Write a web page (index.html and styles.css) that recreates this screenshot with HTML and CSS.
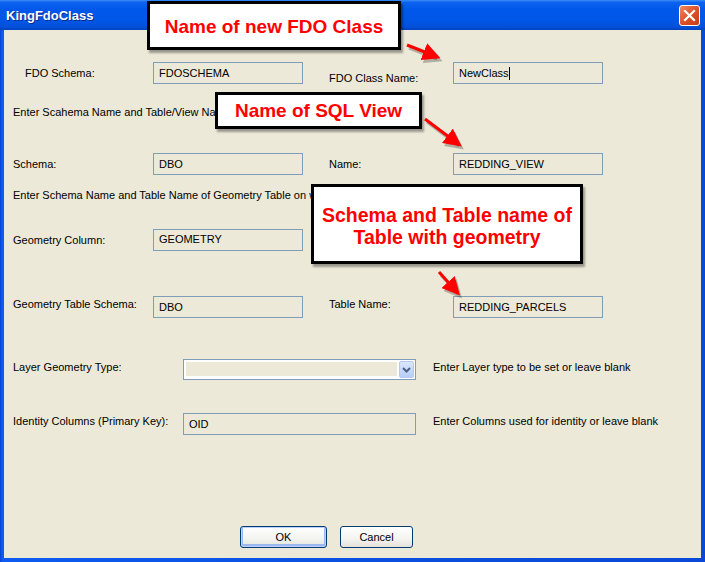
FILE: index.html
```html
<!DOCTYPE html>
<html lang="en">
<head>
    <meta charset="UTF-8">
    <title>KingFdoClass</title>
    <link rel="stylesheet" href="styles.css">
</head>
<body>
    <div class="window">
        <div class="titlebar">
            <span class="title">KingFdoClass</span>
            <span class="close-btn">
                <svg width="13" height="13" viewBox="0 0 13 13"><path d="M2 2 L11 11 M11 2 L2 11" stroke="#fff" stroke-width="2.2" stroke-linecap="square"/></svg>
            </span>
        </div>
        <div class="client">
            <div class="row">
                <label class="indent">FDO Schema:</label>
                <div class="textbox">FDOSCHEMA</div>
                <label class="low">FDO Class Name:</label>
                <div class="textbox">NewClass<span class="caret"></span></div>
            </div>
            <p class="note note-1">Enter Scahema Name and Table/View Name of SQL View</p>
            <div class="row row-2">
                <label>Schema:</label>
                <div class="textbox">DBO</div>
                <label>Name:</label>
                <div class="textbox">REDDING_VIEW</div>
            </div>
            <p class="note note-2">Enter Schema Name and Table Name of Geometry Table on which view is based</p>
            <div class="row row-3">
                <label>Geometry Column:</label>
                <div class="textbox top">GEOMETRY</div>
            </div>
            <div class="row row-4">
                <label class="high">Geometry Table Schema:</label>
                <div class="textbox">DBO</div>
                <label class="high">Table Name:</label>
                <div class="textbox">REDDING_PARCELS</div>
            </div>
            <div class="wide-row row-5">
                <label>Layer Geometry Type:</label>
                <div class="combo">
                    <div class="combo-field"></div>
                    <span class="combo-btn">
                        <svg width="9" height="6" viewBox="0 0 9 6"><path d="M1 1 L4.5 4.5 L8 1" fill="none" stroke="#4d6185" stroke-width="2"/></svg>
                    </span>
                </div>
                <span class="hint">Enter Layer type to be set or leave blank</span>
            </div>
            <div class="wide-row row-6">
                <label>Identity Columns (Primary Key):</label>
                <div class="textbox">OID</div>
                <span class="hint">Enter Columns used for identity or leave blank</span>
            </div>
            <div class="buttons">
                <button class="btn btn-ok">OK</button>
                <button class="btn btn-cancel">Cancel</button>
            </div>
        </div>

        <!-- Annotation callouts, laid over the dialog -->
        <div class="callout callout-1">Name of new FDO Class</div>
        <div class="callout callout-2">Name of SQL View</div>
        <div class="callout callout-3">Schema and Table name of<br>Table with geometry</div>

        <svg class="arrows" width="705" height="562" viewBox="0 0 705 562">
            <defs>
                <marker id="head" markerWidth="6" markerHeight="6" refX="4" refY="3" orient="auto" markerUnits="strokeWidth">
                    <path d="M0 0 L6 3 L0 6 Z" fill="#f00"/>
                </marker>
                <marker id="shade" markerWidth="6" markerHeight="6" refX="4" refY="3" orient="auto" markerUnits="strokeWidth">
                    <path d="M0 0 L6 3 L0 6 Z" fill="rgba(0,0,0,0.25)"/>
                </marker>
            </defs>
            <g stroke="rgba(0,0,0,0.25)" stroke-width="3" marker-end="url(#shade)">
                <line x1="409" y1="48" x2="437" y2="59"/>
                <line x1="427" y1="122" x2="459" y2="146"/>
                <line x1="441" y1="275" x2="458" y2="294"/>
            </g>
            <g stroke="#f00" stroke-width="3" marker-end="url(#head)">
                <line x1="407" y1="45" x2="435" y2="56"/>
                <line x1="425" y1="119" x2="457" y2="143"/>
                <line x1="439" y1="272" x2="456" y2="291"/>
            </g>
        </svg>
    </div>
</body>
</html>
```

FILE: styles.css
```css
body {
    margin: 0;
    padding: 0;
    background-color: #ece9d8;
}
.window {
    position: relative;
    width: 705px;
    height: 562px;
    box-sizing: border-box;
    background: linear-gradient(to right, #0a3fd0, #0d5bf0 2px, #0a50e0 50%, #0a48d8);
    padding: 0 4px 4px 4px;
    font-family: "Liberation Sans", Arial, sans-serif;
    font-size: 11px;
    color: #000;
    overflow: hidden;
}
.titlebar {
    height: 30px;
    margin: 0 -4px;
    padding: 0 5px 0 6px;
    display: flex;
    align-items: center;
    justify-content: space-between;
    background: linear-gradient(to bottom, #3a8cf8 0%, #0d63ee 8%, #0058ea 30%, #0056e6 70%, #0450d8 90%, #0340c0 100%);
}
.title {
    color: #fff;
    font-weight: bold;
    font-size: 13px;
    text-shadow: 1px 1px 0 #0a2a8a;
}
.close-btn {
    width: 19px;
    height: 19px;
    border: 1px solid #fff;
    border-radius: 3px;
    background: linear-gradient(135deg, #f08a60, #e0502a 50%, #c83c14);
    display: flex;
    align-items: center;
    justify-content: center;
    margin-top: 1px;
}
.client {
    height: 528px;
    box-sizing: border-box;
    background-color: #ece9d8;
    padding: 32px 0 0 9px;
}
.row {
    display: grid;
    grid-template-columns: 140px 150px 26px 124px 150px;
    height: 22px;
    align-items: center;
}
.row label:nth-of-type(2) {
    grid-column: 4;
}
.row .textbox:nth-of-type(2) {
    grid-column: 5;
}
.textbox {
    height: 22px;
    box-sizing: border-box;
    border: 1px solid #7f9db9;
    padding: 0 5px;
    display: flex;
    align-items: center;
    white-space: nowrap;
}
.textbox.top {
    align-items: flex-start;
    padding-top: 3px;
}
.caret {
    display: inline-block;
    width: 1px;
    height: 13px;
    background-color: #000;
}
.indent {
    padding-left: 12px;
}
.low {
    padding-top: 9px;
}
.high {
    padding-bottom: 7px;
}
.note {
    margin: 21px 0 0 0;
    line-height: 14px;
    white-space: nowrap;
}
.note-2 {
    margin-top: 13px;
}
.row-2 {
    margin-top: 34px;
}
.row-3 {
    margin-top: 27px;
}
.row-4 {
    margin-top: 45px;
}
.wide-row {
    display: grid;
    grid-template-columns: 170px 233px 17px auto;
    align-items: center;
}
.wide-row label,
.wide-row .hint {
    padding-bottom: 6px;
}
.wide-row .hint {
    grid-column: 4;
}
.row-5 {
    margin-top: 41px;
    height: 21px;
}
.row-6 {
    margin-top: 33px;
    height: 22px;
}
.combo {
    height: 21px;
    box-sizing: border-box;
    border: 1px solid #7f9db9;
    background-color: #fff;
    padding: 1px;
    display: flex;
}
.combo-field {
    flex: 1;
    background-color: #ece9d8;
    margin: 1px 2px 2px 1px;
}
.combo-btn {
    width: 15px;
    border-radius: 2px;
    background: linear-gradient(to bottom, #dce6fd, #b8cdf8);
    border: 1px solid #b5c8f2;
    box-sizing: border-box;
    display: flex;
    align-items: center;
    justify-content: center;
}
.buttons {
    margin: 91px 0 0 227px;
    display: flex;
    gap: 13px;
}
.btn {
    height: 22px;
    border: 1px solid #003c74;
    border-radius: 3px;
    background: linear-gradient(to bottom, #fff, #f3f3ef 60%, #e3e2da);
    font-family: "Liberation Sans", Arial, sans-serif;
    font-size: 11px;
    color: #000;
    padding: 0;
}
.btn-ok {
    width: 87px;
    box-shadow: inset 0 0 0 1px #bccffa, inset 0 -1px 0 2px #9bb8f0;
}
.btn-cancel {
    width: 73px;
}
.callout {
    position: absolute;
    background-color: #fff;
    border: 3px solid #000;
    box-sizing: border-box;
    color: #f00;
    font-family: "Liberation Sans", Arial, sans-serif;
    font-weight: bold;
    font-size: 19px;
    text-align: center;
    box-shadow: 2px 3px 2px rgba(0,0,0,0.35);
    display: flex;
    align-items: center;
    justify-content: center;
}
.callout-1 {
    left: 147px;
    top: 1px;
    width: 254px;
    height: 49px;
    padding-top: 3px;
}
.callout-2 {
    left: 215px;
    top: 92px;
    width: 207px;
    height: 37px;
}
.callout-3 {
    left: 311px;
    top: 184px;
    width: 272px;
    height: 80px;
    line-height: 22px;
    font-size: 19.5px;
    padding-top: 4px;
}
.arrows {
    position: absolute;
    left: 0;
    top: 0;
    pointer-events: none;
}
```
